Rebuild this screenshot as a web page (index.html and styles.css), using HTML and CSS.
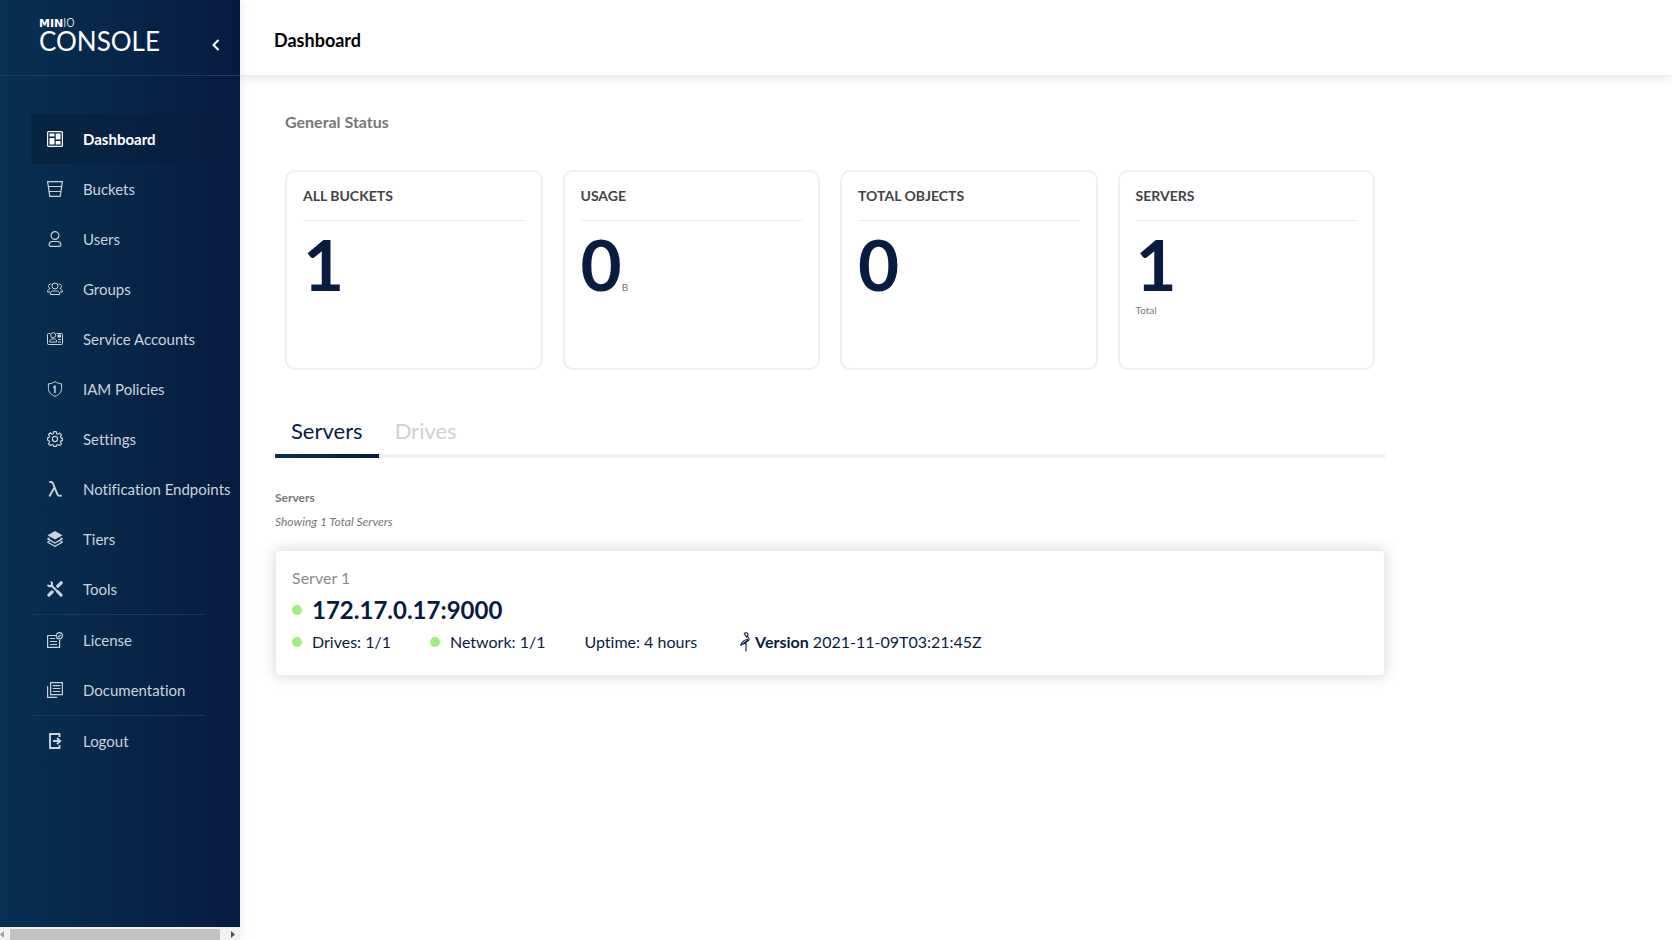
FILE: index.html
```html
<!DOCTYPE html>
<html lang="en">
<head>
<meta charset="utf-8">
<title>MinIO Console</title>
<link rel="stylesheet" href="styles.css">
</head>
<body>
<div class="app">
  <aside class="sidebar">
    <div class="brand">
      <div class="logo">
        <span class="logo-top"><b>MIN</b>IO</span>
        <span class="logo-main">CONSOLE</span>
      </div>
      <button class="collapse" type="button" aria-label="Collapse menu">
        <svg width="8" height="12" viewBox="0 0 8 12"><path d="M6.5 1 1.5 6l5 5" fill="none" stroke="#fff" stroke-width="2"/></svg>
      </button>
    </div>
    <nav class="menu">
      <a class="item active" href="#"><svg class="icon" viewBox="0 0 16 16"><rect x=".6" y=".6" width="14.8" height="14.8" rx="1" fill="none" stroke="currentColor" stroke-width="1.2"/><path fill="currentColor" d="M2.500 2.500h5v3h-5zM2.500 7h5v6.500h-5zM8.700 2.500h4.800V8.500H8.700zM8.700 10h4.800v3.500H8.700z"/></svg>Dashboard</a>
      <a class="item" href="#"><svg class="icon" viewBox="0 0 16 16"><path fill="none" stroke="currentColor" stroke-width="1.2" stroke-linejoin="round" d="M.6.6h14.8L13.200 15.400H2.800zM1.200 5.500h13.600M2 10.500h12"/></svg>Buckets</a>
      <a class="item" href="#"><svg class="icon" viewBox="0 0 16 16"><g fill="none" stroke="currentColor" stroke-width="1.2"><circle cx="8" cy="4.500" r="3.900"/><path stroke-linejoin="round" d="M5.300 10.500h5.400c1.800 0 3 1.300 3.200 3.200 0 1-.6 1.700-1.600 1.700H3.700c-1 0-1.600-.7-1.600-1.700.2-1.900 1.400-3.200 3.200-3.200z"/></g></svg>Users</a>
      <a class="item" href="#"><svg class="icon" viewBox="0 0 16 16"><g fill="none" stroke="currentColor"><circle cx="8" cy="5" r="3"/><path d="M5.500 10h5c1.500.3 2.200 1.500 2.200 3.500H3.300c0-2 .7-3.200 2.200-3.500zM4.500 3.200C2.800 2.600 1.300 3.800 1.500 5.500c.1 1 .7 1.700 1.700 2C1.500 8 .6 9 .5 11h2.600M11.500 3.200c1.700-.6 3.200.6 3 2.300-.1 1-.7 1.700-1.700 2 1.700.5 2.600 1.500 2.700 3.500h-2.600"/></g></svg>Groups</a>
      <a class="item" href="#"><svg class="icon" viewBox="0 0 16 16"><g fill="none" stroke="currentColor"><path d="M3 2.500H1.500a1 1 0 0 0-1 1v9a1 1 0 0 0 1 1h13a1 1 0 0 0 1-1v-9a1 1 0 0 0-1-1H9.500"/><circle cx="6.200" cy="4.200" r="2.500"/><path d="M4.700 8h3c1.300.2 2 1.200 2 3H2.700c0-1.800.7-2.800 2-3zM11 8.500h3M11 11h3"/></g><path fill="currentColor" d="M10.500 3.500h3.500v3h-3.500z"/></svg>Service Accounts</a>
      <a class="item" href="#"><svg class="icon" viewBox="0 0 16 16"><path fill="none" stroke="currentColor" stroke-linejoin="round" d="M8 .6C6 2 3.800 2.700 1.400 2.800v4.700c0 3.500 2.600 6.400 6.600 7.900 4-1.500 6.600-4.400 6.600-7.900V2.800C12.200 2.700 10 2 8 .6z"/><path fill="currentColor" d="M8 4.200a2 2 0 0 0-.8 3.700V12h1.500V4.400z"/></svg>IAM Policies</a>
      <a class="item" href="#"><svg class="icon" viewBox="0 0 16 16"><g fill="none" stroke="currentColor" stroke-width="1.200" stroke-linejoin="round"><path d="M6.700.7h2.600l.4 2 1.300.5 1.700-1.100 1.800 1.800-1.100 1.700.5 1.200 1.500.4v2.200l-1.500.4-.5 1.300 1.100 1.700-1.800 1.800-1.700-1.100-1.300.5-.4 1.400H6.700l-.4-1.400-1.300-.5-1.700 1.100-1.800-1.800L2.600 11l-.5-1.200-1.500-.5V6.900l1.500-.5.500-1.200-1.100-1.700 1.800-1.800L5 3.200l1.300-.5z"/><circle cx="8" cy="8" r="2.600"/></g></svg>Settings</a>
      <a class="item" href="#"><svg class="icon" viewBox="0 0 16 16"><path fill="none" stroke="currentColor" stroke-width="1.900" d="M2.300 1h1.600c1.200 0 1.800.7 2.200 1.700l4.200 10.500c.5 1.200 1.200 1.800 2.300 1.700l2.100-.3M7.500 6.500 2.300 15.500"/></svg>Notification Endpoints</a>
      <a class="item" href="#"><svg class="icon" viewBox="0 0 16 16"><path fill="currentColor" d="M8 0 15.500 4.200 8 8.500.5 4.200z"/><path fill="none" stroke="currentColor" stroke-width="1.300" d="M2.500 6.700.9 7.900 8 12l7.100-4.100-1.600-1.200M2.500 10 .9 11.200 8 15.300l7.100-4.100L13.500 10"/></svg>Tiers</a>
      <a class="item" href="#"><svg class="icon tools" viewBox="0 0 16 16"><g stroke="currentColor" fill="none" stroke-linecap="round"><path stroke-width="3.200" d="m10.800 5.200 3.400-3.400M1.900 14.100 5 11"/><path stroke-width="2.200" d="m4.500 4.500 6 6"/><path stroke-width="3" d="m10.800 10.800 3.300 3.300"/><path stroke-width="2" d="M4.500 1.200a2.800 2.800 0 0 1-.3 3.500 2.700 2.700 0 0 1-3.100-.2"/></g></svg>Tools</a>
      <hr class="rule">
      <a class="item" href="#"><svg class="icon" viewBox="0 0 16 16"><g fill="none" stroke="currentColor" stroke-width="1.200"><path d="M9 3.500H.6v11.900h12V8M3 6.500h5M3 9.500h7M3 12.500h7"/><circle cx="12.300" cy="3.800" r="3.100"/><path d="m10.900 3.800 1 1 1.800-1.900"/></g></svg>License</a>
      <a class="item" href="#"><svg class="icon" viewBox="0 0 16 16"><path fill="none" stroke="currentColor" stroke-width="1.200" d="M3.600.6h11.800v12H3.600zM.6 4.200v11.200h9.600M5.700 3.700h7.600M5.700 6.500h7.600M5.700 9.500h7.600"/></svg>Documentation</a>
      <hr class="rule">
      <a class="item" href="#"><svg class="icon" viewBox="0 0 16 16"><path fill="none" stroke="currentColor" stroke-width="1.900" d="M12.500 4V1H3v14h9.500V12M6 8h7M10 4.800 13.200 8 10 11.200"/></svg>Logout</a>
    </nav>
    <div class="scrollbar">
      <svg width="10" height="13" viewBox="0 0 10 13"><path fill="#a3a3a3" d="M4 4v7L0 7.500z"/></svg>
      <div class="thumb"></div>
      <svg width="20" height="13" viewBox="0 0 20 13"><path fill="#505050" d="M11 4v7l4-3.500z"/></svg>
    </div>
  </aside>
  <main class="main">
    <header class="topbar"><h1>Dashboard</h1></header>
    <div class="content">
      <section class="status">
        <h2>General Status</h2>
        <div class="cards">
          <article class="card"><h3>ALL BUCKETS</h3><p class="value">1</p></article>
          <article class="card"><h3>USAGE</h3><p class="value">0<small>B</small></p></article>
          <article class="card"><h3>TOTAL OBJECTS</h3><p class="value">0</p></article>
          <article class="card"><h3>SERVERS</h3><p class="value">1</p><p class="note">Total</p></article>
        </div>
      </section>
      <div class="tabs" role="tablist">
        <button class="tab selected" type="button" role="tab" aria-selected="true">Servers</button>
        <button class="tab" type="button" role="tab" aria-selected="false">Drives</button>
      </div>
      <section class="servers">
        <h4>Servers</h4>
        <p class="showing">Showing 1 Total Servers</p>
        <article class="server">
          <p class="server-name">Server 1</p>
          <p class="address"><i class="dot"></i>172.17.0.17:9000</p>
          <div class="facts">
            <span class="fact"><i class="dot"></i>Drives: 1/1</span>
            <span class="fact"><i class="dot"></i>Network: 1/1</span>
            <span class="fact">Uptime: 4 hours</span>
            <span class="version"><svg width="10" height="20" viewBox="0 0 10 20"><g fill="none" stroke="#081c42" stroke-width="1.100" stroke-linejoin="round"><path d="M4 2.300C4.600.5 7 .3 7.800 1.800c.5 1 0 1.700-.6 2.200l1.600 2.200c.5.900.2 1.700-.5 2.300L6 10.400v9M4.500 1.800 7 5.800M.5 13.600 8 8M.5 13.600C1.800 10 4.500 7.600 8 7.200M3 12l3-.8"/></g></svg><span><b>Version</b> 2021-11-09T03:21:45Z</span></span>
          </div>
        </article>
      </section>
    </div>
  </main>
</div>
</body>
</html>
```
FILE: styles.css
```css
* { box-sizing: border-box; }
body, h1, h2, h3, h4, p { margin: 0; }
body { font-family: Lato, "Open Sans", sans-serif; font-size: 16px; font-variant-ligatures: none; color: #081c42; background: #fff; }
button { font: inherit; border: 0; padding: 0; background: none; cursor: pointer; }

.app { display: flex; min-height: 100vh; }
.sidebar { display: flex; flex-direction: column; flex: 0 0 240px; min-width: 0; background: linear-gradient(90deg, #073052 0%, #081c42 92%, #081a42 100%); box-shadow: 0 0 10px rgba(0, 0, 0, .1); }
.brand { display: flex; justify-content: space-between; height: 76px; padding: 18px 20px 0 39px; border-bottom: 1px solid #1c3b5f; color: #fff; }
.logo { display: flex; flex-direction: column; }
.logo-top { font: 300 11px/11px Inter, sans-serif; }
.logo-top b { font-family: "DejaVu Sans", sans-serif; font-weight: 700; }
.logo-main { font-size: 26px; font-weight: 400; line-height: 24px; }
.collapse { align-self: flex-start; display: flex; padding-top: 21px; }

.menu { flex: 1; display: flex; flex-direction: column; padding: 38px 0 0 31px; }
.item { display: flex; align-items: center; gap: 20px; height: 50px; padding-left: 16px; font-size: 15px; color: #cad3dc; text-decoration: none; white-space: nowrap; }
.item.active { color: #fff; font-weight: 700; background: linear-gradient(90deg, rgba(0, 0, 0, .18), rgba(0, 0, 0, 0)); }
.icon { width: 16px; height: 16px; flex: none; }
.tools { color: #c5d5ec; }
.rule { width: 173px; margin: 0; border: 0; border-top: 1px solid #1d355f; }
.scrollbar { display: flex; height: 13px; padding: 0; background: #f1f1f1; }
.thumb { flex: 1; margin-top: 2px; background: #c1c1c1; }

.main { flex: 1; min-width: 0; }
.topbar { display: flex; align-items: center; height: 75px; padding: 4px 0 0 34px; box-shadow: 0 3px 10px rgba(0, 0, 0, .1); }
h1 { font-size: 18px; color: #000; }
.content { max-width: 1180px; padding: 36px 35px; }
.status { padding: 0 10px; }
h2 { font-size: 16px; line-height: 22px; color: #777; }
.cards { display: grid; grid-template-columns: repeat(4, 1fr); gap: 20px; margin-top: 37px; }
.card { min-height: 200px; padding: 14px 16px; border: 2px solid #edf0f3; border-radius: 10px; }
h3 { padding-bottom: 14px; border-bottom: 1px solid #eaedee; font-size: 14px; line-height: 20px; color: #444; }
.value { margin-top: 2px; font-size: 71px; font-weight: 700; line-height: 82px; color: #081c42; }
.value small { font-size: 10px; font-weight: 400; color: #777; }
.note { font-size: 10px; line-height: 10px; color: #777; }

.tabs { display: flex; margin-top: 37px; border-bottom: 4px solid #edeff2; }
.tab { height: 51px; margin-bottom: -4px; padding: 0 16px; border-bottom: 4px solid transparent; font-size: 22px; color: #d0d0d0; }
.tab.selected { color: #081c42; border-image: linear-gradient(90deg, #073052, #081a42) 1; border-width: 0 0 4px; }

h4 { margin-top: 32px; font-size: 12px; line-height: 16px; color: #777; }
.showing { margin-top: 8px; font-size: 12px; font-style: italic; line-height: 16px; color: #777; }
.server { margin-top: 20px; padding: 16px; padding-bottom: 18px; border: 1px solid #eaedee; border-radius: 3px; background: #fff; box-shadow: 0 0 15px rgba(0, 0, 0, .16); }
.server-name { line-height: 22px; color: #8a8a8a; }
.address { display: flex; align-items: center; gap: 10px; margin-top: 4px; font-size: 24px; font-weight: 700; line-height: 34px; }
.dot { flex: none; width: 10px; height: 10px; border-radius: 50%; background: #9fee7e; }
.facts { display: flex; flex-wrap: wrap; gap: 0 39px; line-height: 30px; }
.fact { display: flex; align-items: center; gap: 10px; }
.version { display: flex; align-items: center; gap: 5px; margin-left: 4px; }
```
